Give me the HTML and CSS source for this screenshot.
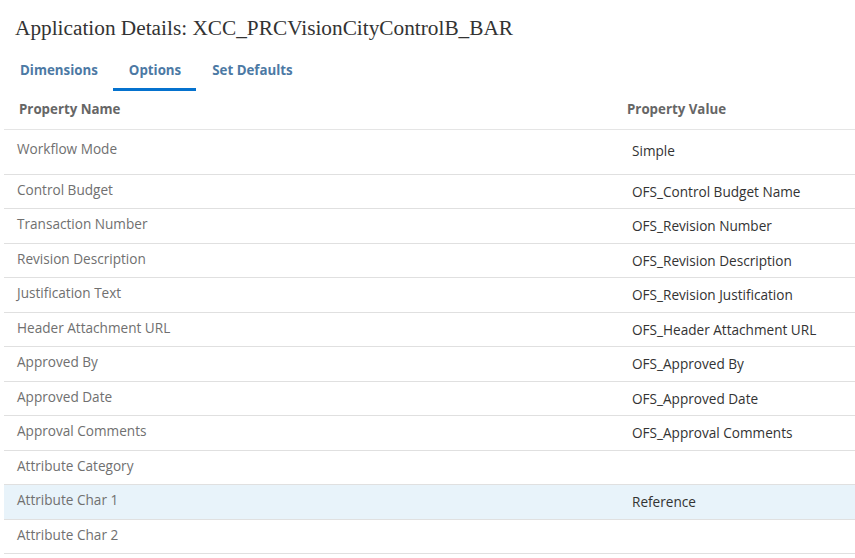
FILE: index.html
```html
<html lang="en">
<head>
    <meta charset="UTF-8">
    <meta name="viewport" content="width=device-width, initial-scale=1.0">
    <title>Application Details</title>
    <link rel="stylesheet" href="styles.css">
</head>
<body>
    <h1 class="title">Application Details: XCC_PRCVisionCityControlB_BAR</h1>
    <div class="tabs">
        <div class="tab">Dimensions</div>
        <div class="tab selected">Options</div>
        <div class="tab">Set Defaults</div>
    </div>
    <table class="props">
        <thead>
            <tr><th class="name">Property Name</th><th class="value">Property Value</th></tr>
        </thead>
        <tbody>
            <tr class="first"><td class="name">Workflow Mode</td><td class="value">Simple</td></tr>
            <tr><td class="name">Control Budget</td><td class="value">OFS_Control Budget Name</td></tr>
            <tr><td class="name">Transaction Number</td><td class="value">OFS_Revision Number</td></tr>
            <tr><td class="name">Revision Description</td><td class="value">OFS_Revision Description</td></tr>
            <tr><td class="name">Justification Text</td><td class="value">OFS_Revision Justification</td></tr>
            <tr><td class="name">Header Attachment URL</td><td class="value">OFS_Header Attachment URL</td></tr>
            <tr><td class="name">Approved By</td><td class="value">OFS_Approved By</td></tr>
            <tr><td class="name">Approved Date</td><td class="value">OFS_Approved Date</td></tr>
            <tr><td class="name">Approval Comments</td><td class="value">OFS_Approval Comments</td></tr>
            <tr><td class="name">Attribute Category</td><td class="value"></td></tr>
            <tr class="hover"><td class="name">Attribute Char 1</td><td class="value">Reference</td></tr>
            <tr><td class="name">Attribute Char 2</td><td class="value"></td></tr>
        </tbody>
    </table>
</body>
</html>
```

FILE: styles.css
```css
body {
    margin: 0;
    padding: 0 0 0 4px;
    background: #fff;
    font-family: "Open Sans", sans-serif;
}

.title {
    font-family: "Liberation Serif", serif;
    font-weight: 400;
    font-size: 21.3px;
    color: #333;
    margin: 0;
    padding: 16px 0 0 11px;
    height: 30px;
}

.tabs {
    display: flex;
    height: 46px;
}

.tab {
    padding: 15px 15px 0 16px;
    font-size: 13.3px;
    font-weight: 700;
    color: #4c79a4;
    box-sizing: border-box;
    height: 45px;
}

.tab.selected {
    border-bottom: 3px solid #0572ce;
}

.props {
    border-collapse: collapse;
    width: 851px;
    font-size: 13.6px;
}

.props th {
    text-align: left;
    font-weight: 700;
    font-size: 13.3px;
    color: #666;
    height: 37px;
    padding: 0 0 2px 0;
    border-bottom: 1px solid #e5e5e5;
}

.props th.name {
    padding-left: 15px;
}

.props th.value {
    padding-left: 1px;
}

.props td {
    height: 34.5px;
    padding: 0;
    border-bottom: 1px solid #e0e0e0;
    vertical-align: middle;
}

.props tr.first td {
    height: 45px;
}

.props td.name {
    width: 609px;
    padding-left: 13px;
    color: #707070;
    padding-bottom: 4px;
}

.props tr.first td.name {
    padding-bottom: 6px;
}

.props td.value {
    padding-left: 6px;
    color: #333;
}

.props tr.first td.value {
    padding-bottom: 2px;
}

.props tr.hover td {
    background: #e8f3fa;
}
```
